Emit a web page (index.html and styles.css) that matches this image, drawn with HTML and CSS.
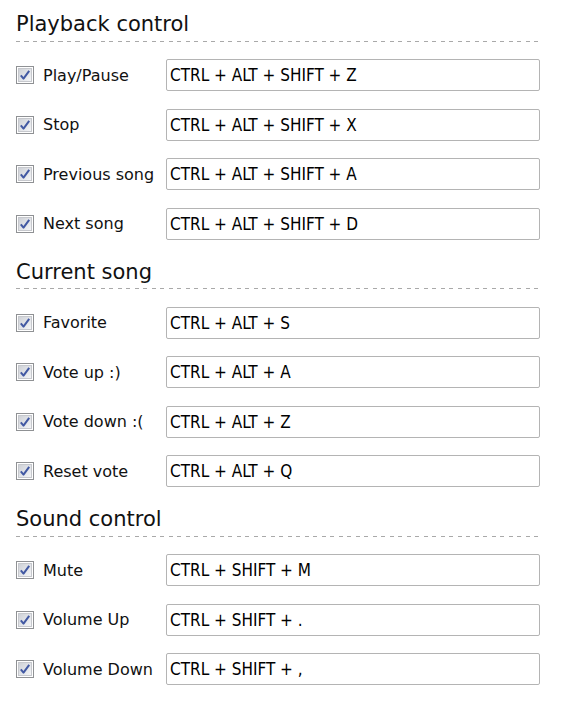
FILE: index.html
```html
<!DOCTYPE html>
<html>
<head>
<meta charset="utf-8">
<link rel="stylesheet" href="styles.css">
</head>
<body>
<div class="page">
  <div class="heading"><h2>Playback control</h2><div class="dash"></div></div>
  <div class="row"><label class="lbl"><span class="cb"><svg viewBox="0 0 18 18" width="18" height="18"><use href="#cbox"/></svg></span>Play/Pause</label><div class="field">CTRL + ALT + SHIFT + Z</div></div>
  <div class="row"><label class="lbl"><span class="cb"><svg viewBox="0 0 18 18" width="18" height="18"><use href="#cbox"/></svg></span>Stop</label><div class="field">CTRL + ALT + SHIFT + X</div></div>
  <div class="row"><label class="lbl"><span class="cb"><svg viewBox="0 0 18 18" width="18" height="18"><use href="#cbox"/></svg></span>Previous song</label><div class="field">CTRL + ALT + SHIFT + A</div></div>
  <div class="row"><label class="lbl"><span class="cb"><svg viewBox="0 0 18 18" width="18" height="18"><use href="#cbox"/></svg></span>Next song</label><div class="field">CTRL + ALT + SHIFT + D</div></div>

  <div class="heading"><h2>Current song</h2><div class="dash"></div></div>
  <div class="row"><label class="lbl"><span class="cb"><svg viewBox="0 0 18 18" width="18" height="18"><use href="#cbox"/></svg></span>Favorite</label><div class="field">CTRL + ALT + S</div></div>
  <div class="row"><label class="lbl"><span class="cb"><svg viewBox="0 0 18 18" width="18" height="18"><use href="#cbox"/></svg></span>Vote up :)</label><div class="field">CTRL + ALT + A</div></div>
  <div class="row"><label class="lbl"><span class="cb"><svg viewBox="0 0 18 18" width="18" height="18"><use href="#cbox"/></svg></span>Vote down :(</label><div class="field">CTRL + ALT + Z</div></div>
  <div class="row"><label class="lbl"><span class="cb"><svg viewBox="0 0 18 18" width="18" height="18"><use href="#cbox"/></svg></span>Reset vote</label><div class="field">CTRL + ALT + Q</div></div>

  <div class="heading"><h2>Sound control</h2><div class="dash"></div></div>
  <div class="row"><label class="lbl"><span class="cb"><svg viewBox="0 0 18 18" width="18" height="18"><use href="#cbox"/></svg></span>Mute</label><div class="field">CTRL + SHIFT + M</div></div>
  <div class="row"><label class="lbl"><span class="cb"><svg viewBox="0 0 18 18" width="18" height="18"><use href="#cbox"/></svg></span>Volume Up</label><div class="field">CTRL + SHIFT + .</div></div>
  <div class="row"><label class="lbl"><span class="cb"><svg viewBox="0 0 18 18" width="18" height="18"><use href="#cbox"/></svg></span>Volume Down</label><div class="field">CTRL + SHIFT + ,</div></div>
</div>
<svg width="0" height="0" class="defs">
  <defs>
    <linearGradient id="cbfill" x1="0" y1="0" x2="1" y2="1">
      <stop offset="0" stop-color="#cdd0d6"/>
      <stop offset="1" stop-color="#f5f6f8"/>
    </linearGradient>
    <g id="cbox">
      <rect x="0.5" y="0.5" width="17" height="17" fill="#ffffff" stroke="#8f9194"/>
      <rect x="2.5" y="2.5" width="13" height="13" fill="url(#cbfill)" stroke="#c6c8cd"/>
      <path d="M4.8 9.4 L7.5 12.6 L13.2 4.8" fill="none" stroke="#4259a3" stroke-width="2" stroke-linejoin="round"/>
    </g>
  </defs>
</svg>
</body>
</html>
```
FILE: styles.css
```css
html, body {
  margin: 0;
  padding: 0;
  background: #ffffff;
}
body {
  font-family: "DejaVu Sans", sans-serif;
  color: #111111;
}
.page {
  width: 524px;
  padding: 9.5px 0 0 16px;
  display: flex;
  flex-direction: column;
  gap: 17.5px;
}
.heading {
  height: 32px;
  display: flex;
  flex-direction: column;
  justify-content: flex-end;
}
.heading h2 {
  margin: 0;
  font-family: "DejaVu Sans", sans-serif;
  font-size: 21px;
  font-weight: normal;
  line-height: 26px;
  color: #111111;
}
.dash {
  height: 1px;
  margin-top: 3.5px;
  background: repeating-linear-gradient(to right, #a9a9a9 0, #a9a9a9 4px, transparent 4px, transparent 8.5px);
}
.row {
  height: 32px;
  display: flex;
  align-items: center;
}
.lbl {
  width: 150px;
  flex: none;
  display: flex;
  align-items: center;
  font-family: "DejaVu Sans", sans-serif;
  font-size: 16px;
  white-space: nowrap;
}
.cb {
  width: 18px;
  height: 18px;
  margin-right: 9px;
  display: block;
  flex: none;
}
.cb svg {
  display: block;
}
.field {
  flex: 1;
  height: 32px;
  box-sizing: border-box;
  border: 1px solid #b4b4b4;
  border-radius: 2px;
  padding: 0 3px;
  font-family: "DejaVu Sans Condensed", "DejaVu Sans", sans-serif;
  font-stretch: condensed;
  font-size: 17px;
  line-height: 30px;
  color: #000000;
  white-space: nowrap;
}
.defs {
  position: absolute;
  width: 0;
  height: 0;
}
```
